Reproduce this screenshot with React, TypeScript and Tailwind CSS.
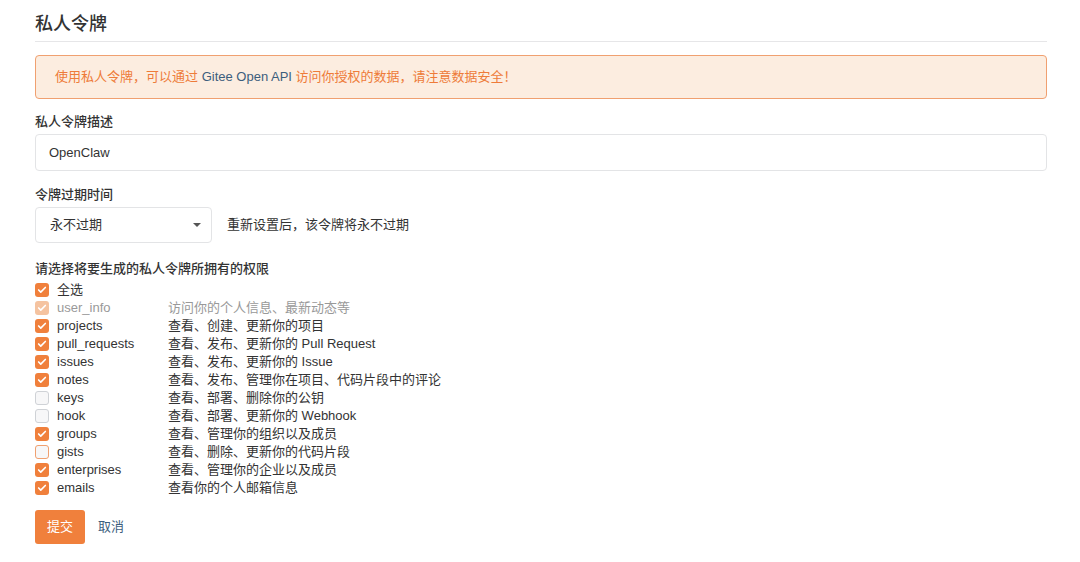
import { Check } from "lucide-react";

type Perm = {
  name: string;
  desc: string;
  checked: boolean;
  disabled?: boolean;
  focus?: boolean;
};

const perms: Perm[] = [
  { name: "user_info", desc: "访问你的个人信息、最新动态等", checked: true, disabled: true },
  { name: "projects", desc: "查看、创建、更新你的项目", checked: true },
  { name: "pull_requests", desc: "查看、发布、更新你的 Pull Request", checked: true },
  { name: "issues", desc: "查看、发布、更新你的 Issue", checked: true },
  { name: "notes", desc: "查看、发布、管理你在项目、代码片段中的评论", checked: true },
  { name: "keys", desc: "查看、部署、删除你的公钥", checked: false },
  { name: "hook", desc: "查看、部署、更新你的 Webhook", checked: false },
  { name: "groups", desc: "查看、管理你的组织以及成员", checked: true },
  { name: "gists", desc: "查看、删除、更新你的代码片段", checked: false, focus: true },
  { name: "enterprises", desc: "查看、管理你的企业以及成员", checked: true },
  { name: "emails", desc: "查看你的个人邮箱信息", checked: true },
];

function Box({ checked, disabled, focus }: { checked: boolean; disabled?: boolean; focus?: boolean }) {
  if (checked) {
    return (
      <span
        className={
          "flex h-[14px] w-[14px] items-center justify-center rounded-[3px] " +
          (disabled ? "bg-[#f5c3a0]" : "bg-[#f0803c]")
        }
      >
        <Check className="h-[10px] w-[10px] text-white" strokeWidth={4} />
      </span>
    );
  }
  return (
    <span
      className={
        "h-[14px] w-[14px] rounded-[3px] border bg-[#f7f7f8] " +
        (focus ? "border-[#f0a070]" : "border-[#cfd2d6]")
      }
    />
  );
}

export default function App() {
  return (
    <div
      className="min-h-[562px] bg-white pl-[35px] pr-[33px] pt-[13px] text-[13px] text-[#333]"
      style={{ fontFamily: '"Liberation Sans", "Noto Sans CJK SC", sans-serif' }}
    >
      <h2 className="border-b border-[#e6e6e8] pb-[6px] text-[18px] font-medium leading-[22px] text-[#333]">
        私人令牌
      </h2>

      <div className="mt-[13px] flex h-[44px] items-center rounded-[4px] border border-[#f0a070] bg-[#fcede0] px-[19px] text-[13px] text-[#ee7b39]">
        使用私人令牌，可以通过&nbsp;<span className="text-[#3c5e7d]">Gitee Open API</span>&nbsp;访问你授权的数据，请注意数据安全！
      </div>

      <div className="mt-[13px] text-[13px] font-medium leading-[20px]">私人令牌描述</div>
      <div className="mt-[2px] flex h-[37px] items-center rounded-[4px] border border-[#e3e4e6] px-[13px] text-[13px]">
        OpenClaw
      </div>

      <div className="mt-[14px] text-[13px] font-medium leading-[20px]">令牌过期时间</div>
      <div className="mt-[2px] flex items-center">
        <div className="flex h-[36px] w-[177px] items-center justify-between rounded-[4px] border border-[#e3e4e6] pl-[14px] pr-[10px]">
          <span>永不过期</span>
          <span className="h-0 w-0 border-x-[4px] border-t-[4px] border-x-transparent border-t-[#555]" />
        </div>
        <span className="ml-[15px]">重新设置后，该令牌将永不过期</span>
      </div>

      <div className="mt-[16px] text-[13px] font-medium leading-[20px]">请选择将要生成的私人令牌所拥有的权限</div>
      <div className="mt-[2px] flex flex-col">
        <label className="flex h-[18px] items-center">
          <Box checked />
          <span className="ml-[8px]">全选</span>
        </label>
        {perms.map((p) => (
          <label key={p.name} className="flex h-[18px] items-center">
            <Box checked={p.checked} disabled={p.disabled} focus={p.focus} />
            <span className={"ml-[8px] w-[111px] " + (p.disabled ? "text-[#999]" : "")}>{p.name}</span>
            <span className={p.disabled ? "text-[#999]" : ""}>{p.desc}</span>
          </label>
        ))}
      </div>

      <div className="mt-[13px] flex items-center">
        <button className="h-[34px] w-[50px] rounded-[3px] bg-[#f0803c] text-[13px] text-white">提交</button>
        <a className="ml-[13px] text-[13px] text-[#3c5e7d]">取消</a>
      </div>
    </div>
  );
}
